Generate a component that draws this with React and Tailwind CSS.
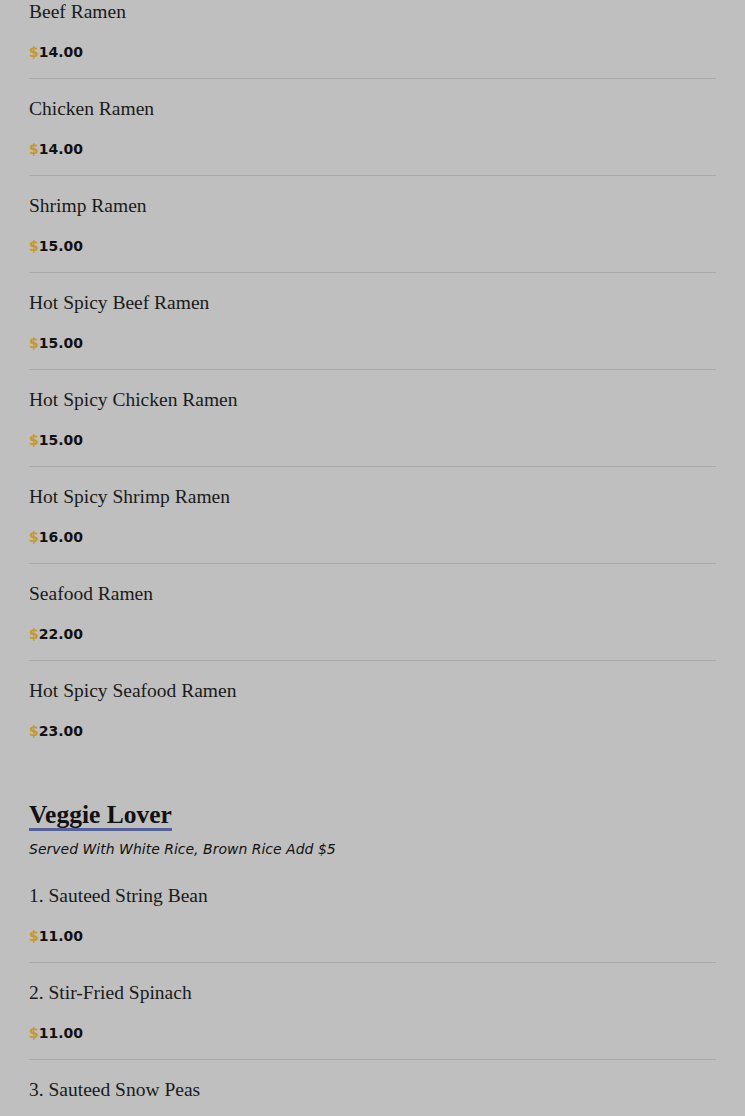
import React from "react";

const ramen = [
  ["Beef Ramen", "14.00"],
  ["Chicken Ramen", "14.00"],
  ["Shrimp Ramen", "15.00"],
  ["Hot Spicy Beef Ramen", "15.00"],
  ["Hot Spicy Chicken Ramen", "15.00"],
  ["Hot Spicy Shrimp Ramen", "16.00"],
  ["Seafood Ramen", "22.00"],
  ["Hot Spicy Seafood Ramen", "23.00"],
];

const veggie = [
  ["1. Sauteed String Bean", "11.00"],
  ["2. Stir-Fried Spinach", "11.00"],
  ["3. Sauteed Snow Peas", "11.00"],
];

function Item({ name, price, last }) {
  return (
    <div
      className={
        "pt-4 pb-4 " + (last ? "" : "border-b border-[#a9a9a9]")
      }
    >
      <div className="text-[19.5px] leading-[28px] text-[#1a1a1a] font-['Liberation_Serif',serif]">
        {name}
      </div>
      <div className="mt-4 text-[14px] leading-[20px] font-bold font-['DejaVu_Sans',sans-serif] text-[#111]">
        <span className="text-[#c49a22]">$</span>
        {price}
      </div>
    </div>
  );
}

export default function App() {
  return (
    <div className="h-[1116px] w-full bg-[#bfbfbf] overflow-hidden">
      <div className="px-[29px] -mt-[18px]">
        {ramen.map(([n, p], i) => (
          <Item key={n} name={n} price={p} last={i === ramen.length - 1} />
        ))}
        <div className="mt-[45px]">
          <h2 className="inline-block text-[25.5px] leading-[26px] font-bold text-[#111] font-['Liberation_Serif',serif] border-b-[3px] border-[#55629a]">
            Veggie Lover
          </h2>
          <div className="mt-[8px] text-[14px] leading-[20px] italic text-[#111] font-['DejaVu_Sans',sans-serif]">
            Served With White Rice, Brown Rice Add $5
          </div>
        </div>
        <div className="mt-[7px]">
          {veggie.map(([n, p]) => (
            <Item key={n} name={n} price={p} />
          ))}
        </div>
      </div>
    </div>
  );
}
